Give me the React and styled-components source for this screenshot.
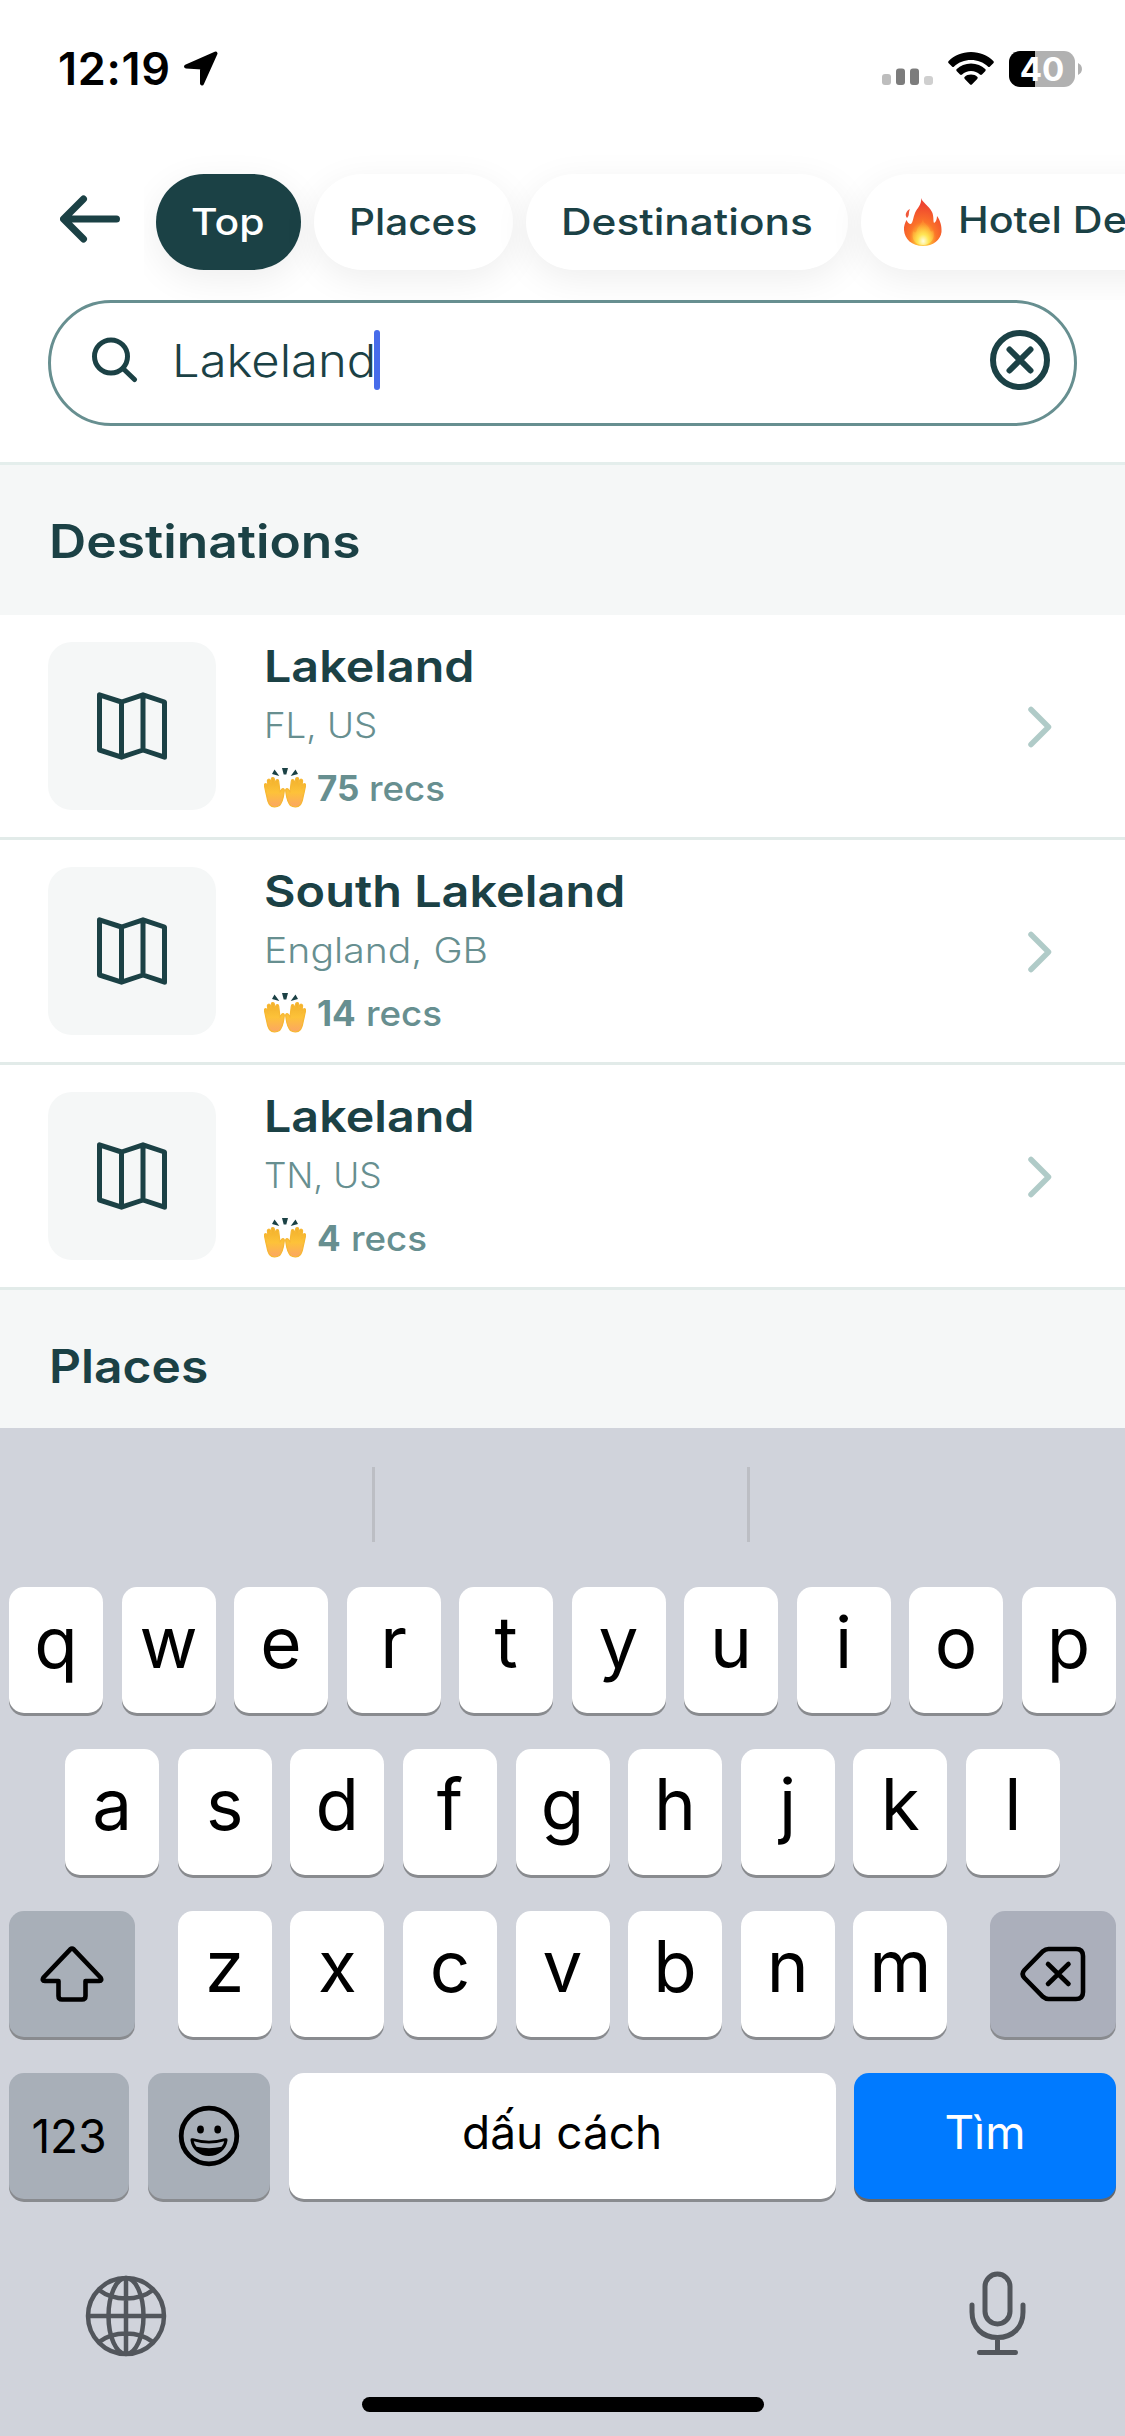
import React from "react";
import styled, { createGlobalStyle } from "styled-components";

const ink = "#1b4145";
const muted = "#678f90";

const GlobalStyle = createGlobalStyle`
  *, *::before, *::after { box-sizing: border-box; }
  body { margin: 0; background: #fff; font-family: Inter, "Liberation Sans", sans-serif; }
  svg { display: block; flex: none; }
  button { font-family: inherit; border: 0; padding: 0; margin: 0; background: none; }
  h2, h3, p { margin: 0; font-weight: 400; }
`;

const Screen = styled.div`
  display: flex;
  flex-direction: column;
  width: 1125px;
  height: 2436px;
  overflow: hidden;
  background: #fff;
  color: ${ink};
`;

const Wide = styled.span`
  display: inline-block;
  transform: scaleX(${(p) => p.$x || 1.11});
  transform-origin: left center;
`;

/* ---------- status bar ---------- */
const StatusBar = styled.div`
  display: flex;
  justify-content: space-between;
  height: 120px;
  padding: 50px 42px 0 58px;
  color: #000;
`;
const StatusGroup = styled.div`
  display: flex;
  align-items: center;
  height: 38px;
`;
const Clock = styled.span`
  width: 125px;
  font-size: 45px;
  line-height: 38px;
  font-weight: 600;
  letter-spacing: 0.7px;
`;
const WifiWrap = styled.div`
  margin-left: 14px;
`;
const Battery = styled.div`
  display: flex;
  align-items: center;
  justify-content: center;
  width: 66px;
  height: 36px;
  margin-left: 15px;
  border-radius: 11px;
  background: linear-gradient(90deg, #000 26px, #b1b1b1 26px);
  color: #fff;
  font-size: 33px;
  line-height: 36px;
  font-weight: 700;
`;

/* ---------- filter chips ---------- */
const TopBar = styled.div`
  display: flex;
  height: 180px;
  padding-left: 60px;
`;
const BackButton = styled.button`
  display: flex;
  align-items: flex-start;
  width: 84px;
  height: 180px;
  padding-top: 75px;
`;
const Chips = styled.div`
  display: flex;
  flex: 1;
  min-width: 0;
  gap: 12.5px;
  padding: 54px 0 0 12px;
  overflow: hidden;
`;
const Chip = styled.button`
  display: flex;
  flex: none;
  align-items: center;
  width: ${(p) => p.$w}px;
  height: 96px;
  padding-left: ${(p) => p.$pad || 35}px;
  border-radius: 48px;
  background: ${(p) => (p.$active ? ink : "#fff")};
  color: ${(p) => (p.$active ? "#fff" : ink)};
  box-shadow: 0 9px 36px rgba(0, 0, 0, 0.07);
  font-size: 36.5px;
  font-weight: 500;
  white-space: nowrap;
`;
const ChipLabel = styled.span`
  margin-left: 15px;
  padding-bottom: 4px;
`;

/* ---------- search ---------- */
const SearchArea = styled.div`
  height: 165px;
  padding: 0 48px;
  border-bottom: 3px solid #e4eeec;
`;
const SearchBox = styled.div`
  display: flex;
  align-items: center;
  height: 126px;
  padding: 0 24px 6px 40px;
  border: 3px solid ${muted};
  border-radius: 63px;
  background: #fff;
`;
const Query = styled.span`
  width: 202px;
  margin-left: 34px;
  padding-top: 2px;
  font-size: 44.5px;
  line-height: 60px;
  font-weight: 300;
  white-space: nowrap;
`;
const Caret = styled.span`
  width: 6px;
  height: 60px;
  margin-right: auto;
  border-radius: 3px;
  background: #476cea;
`;

/* ---------- results ---------- */
const SectionHeader = styled.h2`
  display: flex;
  flex: none;
  align-items: center;
  height: ${(p) => p.$h}px;
  padding: ${(p) => p.$top}px 49px 0;
  background: #f5f7f7;
  font-size: 46px;
  font-weight: 600;
`;
const ResultRow = styled.div`
  display: flex;
  flex: none;
  height: 225px;
  padding: 27px 72px 0 48px;
  border-bottom: 3px solid #e2ebe9;
`;
const Thumb = styled.div`
  display: flex;
  align-items: center;
  justify-content: center;
  width: 168px;
  height: 168px;
  border-radius: 24px;
  background: #f5f7f7;
`;
const RowText = styled.div`
  display: flex;
  flex: 1;
  flex-direction: column;
  padding-left: 48px;
  white-space: nowrap;
`;
const RowTitle = styled.h3`
  font-size: 44px;
  line-height: 48px;
  font-weight: 600;
`;
const RowPlace = styled.p`
  margin-top: 15px;
  color: ${muted};
  font-size: 35px;
  line-height: 40px;
  font-weight: 320;
`;
const RowRecs = styled.p`
  display: flex;
  align-items: center;
  gap: 10px;
  margin-top: 23px;
  color: ${muted};
  font-size: 35px;
  line-height: 40px;
  font-weight: 500;
`;
const Count = styled.b`
  margin-left: 1px;
  font-weight: 700;
`;
const RowChevron = styled.div`
  padding-top: 64px;
`;

/* ---------- keyboard ---------- */
const Keyboard = styled.div`
  display: flex;
  flex-direction: column;
  height: 1008px;
  background: #d0d3db;
  color: #000;
`;
const Suggestions = styled.div`
  display: flex;
  justify-content: center;
  gap: 372px;
  height: 159px;
  padding: 39px 3px 0 0;
`;
const SuggestionRule = styled.span`
  width: 3px;
  height: 75px;
  background: #bcbec4;
`;
const KeyRow = styled.div`
  display: flex;
  justify-content: ${(p) => p.$justify || "space-between"};
  height: 162px;
  padding: 0 9px;
`;
const Letters = styled.div`
  display: flex;
  gap: ${(p) => p.$gap || 18.6}px;
`;
const toneBg = { light: "#fff", gray: "#a8afb8", cool: "#abafbb", blue: "#007aff" };
const Key = styled.button`
  display: flex;
  flex: none;
  align-items: center;
  justify-content: center;
  width: ${(p) => p.$w || 94}px;
  height: 126px;
  margin-left: ${(p) => p.$inset || 0}px;
  padding-bottom: ${(p) => p.$lift || 0}px;
  border-radius: 15px;
  background: ${(p) => toneBg[p.$tone || "light"]};
  box-shadow: 0 3px 0 ${(p) => (p.$tone === "blue" ? "#63676d" : "#898b8f")};
  color: ${(p) => (p.$tone === "blue" ? "#fff" : "#000")};
  font-size: ${(p) => p.$size || 71}px;
  font-weight: ${(p) => (p.$size ? 400 : 380)};
`;
const BottomBar = styled.div`
  display: flex;
  justify-content: space-between;
  height: 162px;
  padding: 36px 99px 0 85px;
`;
const GlobeWrap = styled.div`
  padding-top: 4px;
`;
const HomeIndicator = styled.div`
  width: 402px;
  height: 15px;
  margin: 0 auto;
  border-radius: 8px;
  background: #000;
`;

/* ---------- icons ---------- */
const LocationIcon = () => (
  <svg width="36" height="36" viewBox="0 0 36 36">
    <path d="M3 15.5 32.5 2.5 19 32.5V16.5Z" fill="#000" stroke="#000" strokeWidth="4" strokeLinejoin="round" />
  </svg>
);
const SignalIcon = () => (
  <svg width="52" height="36" viewBox="0 0 52 36">
    <rect x="0" y="23" width="9" height="11" rx="3" fill="#bdbdbd" />
    <rect x="14" y="17.500" width="9" height="16.500" rx="3" fill="#7c7c7c" />
    <rect x="28" y="17.500" width="9" height="16.500" rx="3" fill="#7c7c7c" />
    <rect x="42" y="25" width="9" height="9" rx="3" fill="#cfcfcf" />
  </svg>
);
const WifiIcon = () => (
  <svg width="46" height="34" viewBox="0 0 46 34">
    <path d="M23 0C32 0 40 3.500 45.300 9 46 9.800 46 10.600 45.300 11.300L42 14.500C41.300 15.200 40.600 15.200 39.900 14.500 35.400 10.300 29.500 8 23 8S10.600 10.300 6.100 14.500C5.400 15.200 4.700 15.200 4 14.500L.7 11.300C0 10.600 0 9.800.7 9 6 3.500 14 0 23 0Z" />
    <path d="M23 11.500C28.800 11.500 33.600 13.700 37.200 17.100 37.900 17.800 37.900 18.500 37.200 19.200L34 22.400C33.300 23.100 32.600 23 31.900 22.400 29.500 20.300 26.500 19 23 19S16.500 20.300 14.100 22.400C13.400 23 12.700 23.100 12 22.400L8.800 19.200C8.100 18.500 8.100 17.800 8.800 17.100 12.400 13.700 17.200 11.500 23 11.500Z" />
    <path d="M23 22.500C25.700 22.500 27.700 23.400 29.200 24.800 29.900 25.500 29.900 26.200 29.200 26.900L24.100 32.200C23.400 33 22.600 33 21.900 32.200L16.800 26.900C16.100 26.200 16.100 25.500 16.800 24.800 18.300 23.400 20.300 22.500 23 22.500Z" />
  </svg>
);
const BatteryCap = () => (
  <svg width="8" height="12" viewBox="0 0 8 12">
    <path d="M3 0C8.300 2.500 8.300 9.500 3 12Z" fill="#b1b1b1" />
  </svg>
);
const BackIcon = () => (
  <svg width="60" height="48" viewBox="0 0 60 48" fill="none" stroke={ink} strokeWidth="7" strokeLinecap="round" strokeLinejoin="round">
    <path d="M23.500 4 3.500 24 23.500 44M4 24H56.500" />
  </svg>
);
const FireIcon = () => (
  <svg width="40" height="48" viewBox="0 0 40 48">
    <defs>
      <radialGradient id="flame" cx="0.5" cy="0.86" r="0.72">
        <stop offset="0" stopColor="#fff59a" />
        <stop offset="0.25" stopColor="#ffc038" />
        <stop offset="0.5" stopColor="#fb7429" />
        <stop offset="1" stopColor="#ee4430" />
      </radialGradient>
      <radialGradient id="core" cx="0.5" cy="0.85" r="0.65">
        <stop offset="0" stopColor="#fffde0" />
        <stop offset="0.4" stopColor="#ffe654" />
        <stop offset="1" stopColor="#ffa935" stopOpacity="0.3" />
      </radialGradient>
    </defs>
    <path d="M18 0C19 4 26 8 29 14 31 18 30 23 31 25 33 24 34 21 34 18 37 22 39 28 38.500 34 37.500 42 30 48 20 48 9 48 1.500 41 1 32 .7 28 2 25 3.500 22 4.500 24 5.500 26 8 26 10 24 10 20 12 15 14 10 19 7 18 0Z" fill="url(#flame)" />
    <path d="M7 11C5 15 7 17 4 20 1.500 17 3 13 7 11Z" fill="#f0583a" />
    <path d="M20 21C20 26 26 27 27 32 28 34 29 34 30 32 33 40 28 47 20 47S8 41 10 33C12 35 13 35 14 32 15 28 19 26 20 21Z" fill="url(#core)" />
  </svg>
);
const SearchIcon = () => (
  <svg width="47" height="46" viewBox="0 0 47 46" fill="none" stroke={ink} strokeWidth="5" strokeLinecap="round">
    <circle cx="20" cy="19.500" r="16.500" />
    <path d="M32 31.500 43.500 42.500" />
  </svg>
);
const ClearIcon = () => (
  <svg width="60" height="60" viewBox="0 0 60 60" fill="none" stroke={ink} strokeWidth="6" strokeLinecap="round">
    <circle cx="30" cy="30" r="27" />
    <path d="M19.500 19.500 40.500 40.500M40.500 19.500 19.500 40.500" />
  </svg>
);
const MapIcon = () => (
  <svg width="70" height="68" viewBox="0 0 70 68" fill="none" stroke={ink} strokeWidth="5" strokeLinejoin="round">
    <path d="M2.500 2.800 24.500 10 46 2.800 67.500 10V65.200L46 58 24.500 65.200 2.500 58ZM24.500 10V65M46 3V58" />
  </svg>
);
const Hand = ({ flip }) => (
  <g transform={flip ? "translate(42 0) scale(-1 1)" : undefined}>
    <path
      d="M6 37C3 34 3.500 30 2 25L.4 17.500C0 15.500 2.300 15 3 16.800L4.300 20 3.400 13C3.200 11 5.600 10.500 6.200 12.500L7.600 17 7.300 11.300C7.200 9.300 10 9 10.400 11L11.500 17 12 13C12.200 11.200 14.600 11.300 14.700 13.200L16 24 17.600 21.500C19 20 20.600 20.800 20.300 22.800 19.500 28 19.500 33 15.500 37.500 12.500 39.500 8 39.300 6 37Z"
      fill="url(#palm)"
      stroke="#f7b732"
      strokeWidth="1.2"
      strokeLinejoin="round"
    />
  </g>
);
const HandsIcon = () => (
  <svg width="42" height="40" viewBox="0 0 42 40">
    <defs>
      <linearGradient id="palm" x1="0" y1="0" x2="0" y2="1">
        <stop offset="0" stopColor="#f0b02c" />
        <stop offset="0.5" stopColor="#fdc239" />
        <stop offset="1" stopColor="#fba663" />
      </linearGradient>
    </defs>
    <Hand />
    <Hand flip />
    <path d="M18 0H24L22.300 6.500H19.700ZM10.500 1.500 15.300 8 8 6ZM31.500 1.500 26.700 8 34 6Z" fill={ink} />
  </svg>
);
const ChevronIcon = () => (
  <svg width="26" height="42" viewBox="0 0 26 42" fill="none" stroke="#b0cbc8" strokeWidth="5.5" strokeLinecap="round" strokeLinejoin="round">
    <path d="M4 3.500 21.500 21 4 38.500" />
  </svg>
);
const ShiftIcon = () => (
  <svg width="64" height="56" viewBox="0 0 64 56" fill="none" stroke="#000" strokeWidth="4.6" strokeLinejoin="round">
    <path d="M30.300 3.300Q32 1.800 33.700 3.300L60.500 31.500Q62.500 34.700 59 35H45.500V50Q45.500 53.500 42 53.500H22Q18.500 53.500 18.500 50V35H5Q1.500 34.700 3.500 31.500Z" />
  </svg>
);
const DeleteIcon = () => (
  <svg width="66" height="56" viewBox="0 0 66 56" fill="none" stroke="#000" strokeWidth="4.600" strokeLinecap="round" strokeLinejoin="round">
    <path d="M28.500 3H56Q63 3 63 10V46Q63 53 56 53H28.500Q25.500 53 23 50.800L4.500 32Q.8 28 4.500 24L23 5.200Q25.500 3 28.500 3Z" />
    <path d="M28 18 48.500 38M48.500 18 28 38" />
  </svg>
);
const SmileIcon = () => (
  <svg width="62" height="62" viewBox="0 0 62 62">
    <circle cx="31" cy="31" r="27.800" fill="none" stroke="#000" strokeWidth="4.800" />
    <ellipse cx="22.500" cy="24.500" rx="3.400" ry="4" />
    <ellipse cx="39.700" cy="24.500" rx="3.400" ry="4" />
    <path d="M12.500 35.500Q12 32.500 15 33.300 31 38 47 33.300 50 32.500 49.500 35.500C48 45 40.500 51 31 51S14 45 12.500 35.500Z" />
    <path d="M15.800 36.200Q31 41 46.200 36.200 45.700 39.500 43.500 41.800 31 44.500 18.500 41.800 16.300 39.500 15.800 36.200Z" fill="#a8afb8" />
  </svg>
);
const GlobeIcon = () => (
  <svg width="82" height="82" viewBox="0 0 82 82" fill="none" stroke="#52565c" strokeWidth="4.500">
    <circle cx="41" cy="41" r="38" />
    <ellipse cx="41" cy="41" rx="17.500" ry="38" />
    <path d="M41 3V79M3 41H79M14 15Q25 23.500 41 23.500T68 15M14 67Q25 58.500 41 58.500T68 67" />
  </svg>
);
const MicIcon = () => (
  <svg width="58" height="86" viewBox="0 0 58 86" fill="none" stroke="#52565c" strokeWidth="5" strokeLinecap="round">
    <rect x="17" y="3" width="25" height="50" rx="12.500" />
    <path d="M4 34V41C4 56 14 66.500 29.500 66.500S55 56 55 41V34M29.500 67V81M11.500 81.500H47.500" />
  </svg>
);

const results = [
  { name: "Lakeland", place: "FL, US", recs: 75, nameX: 1.1, placeX: 1.05 },
  { name: "South Lakeland", place: "England, GB", recs: 14, nameX: 1.104, placeX: 1.12 },
  { name: "Lakeland", place: "TN, US", recs: 4, nameX: 1.1, placeX: 1.01 },
];

const LetterKeys = ({ chars, gap }) => (
  <Letters $gap={gap}>
    {chars.split("").map((c) => (
      <Key key={c} $lift={16}>
        {c}
      </Key>
    ))}
  </Letters>
);

export default function App() {
  return (
    <Screen>
      <GlobalStyle />
      <StatusBar>
        <StatusGroup>
          <Clock>12:19</Clock>
          <LocationIcon />
        </StatusGroup>
        <StatusGroup>
          <SignalIcon />
          <WifiWrap>
            <WifiIcon />
          </WifiWrap>
          <Battery>40</Battery>
          <BatteryCap />
        </StatusGroup>
      </StatusBar>

      <TopBar>
        <BackButton aria-label="Back">
          <BackIcon />
        </BackButton>
        <Chips>
          <Chip $active $w={145}>
            <Wide $x={1.12}>Top</Wide>
          </Chip>
          <Chip $w={199.5}>
            <Wide $x={1.11}>Places</Wide>
          </Chip>
          <Chip $w={322.5}>
            <Wide $x={1.16}>Destinations</Wide>
          </Chip>
          <Chip $w={380} $pad={42}>
            <FireIcon />
            <ChipLabel>
              <Wide $x={1.13}>Hotel Deals</Wide>
            </ChipLabel>
          </Chip>
        </Chips>
      </TopBar>

      <SearchArea>
        <SearchBox>
          <SearchIcon />
          <Query>
            <Wide $x={1.1}>Lakeland</Wide>
          </Query>
          <Caret />
          <ClearIcon />
        </SearchBox>
      </SearchArea>

      <SectionHeader $h={150} $top={1}>
        <Wide $x={1.12}>Destinations</Wide>
      </SectionHeader>
      {results.map((r) => (
        <ResultRow key={r.place}>
          <Thumb>
            <MapIcon />
          </Thumb>
          <RowText>
            <RowTitle>
              <Wide $x={r.nameX}>{r.name}</Wide>
            </RowTitle>
            <RowPlace>
              <Wide $x={r.placeX}>{r.place}</Wide>
            </RowPlace>
            <RowRecs>
              <HandsIcon />
              <Count>{r.recs}</Count>
              <Wide $x={1.05}>recs</Wide>
            </RowRecs>
          </RowText>
          <RowChevron>
            <ChevronIcon />
          </RowChevron>
        </ResultRow>
      ))}
      <SectionHeader $h={138} $top={14}>
        <Wide $x={1.08}>Places</Wide>
      </SectionHeader>

      <Keyboard>
        <Suggestions>
          <SuggestionRule />
          <SuggestionRule />
        </Suggestions>
        <KeyRow>
          <LetterKeys chars="qwertyuiop" gap={18.5} />
        </KeyRow>
        <KeyRow $justify="center">
          <LetterKeys chars="asdfghjkl" />
        </KeyRow>
        <KeyRow>
          <Key $w={126} $tone="gray" aria-label="Shift">
            <ShiftIcon />
          </Key>
          <LetterKeys chars="zxcvbnm" />
          <Key $w={126} $tone="cool" aria-label="Delete">
            <DeleteIcon />
          </Key>
        </KeyRow>
        <KeyRow>
          <Key $w={120} $tone="gray" $size={46}>123</Key>
          <Key $w={122} $inset={1} $tone="gray" aria-label="Emoji">
            <SmileIcon />
          </Key>
          <Key $w={547} $size={46} $lift={8}>dấu cách</Key>
          <Key $w={262} $tone="blue" $size={46} $lift={8}>Tìm</Key>
        </KeyRow>
        <BottomBar>
          <GlobeWrap>
            <GlobeIcon />
          </GlobeWrap>
          <MicIcon />
        </BottomBar>
        <HomeIndicator />
      </Keyboard>
    </Screen>
  );
}
